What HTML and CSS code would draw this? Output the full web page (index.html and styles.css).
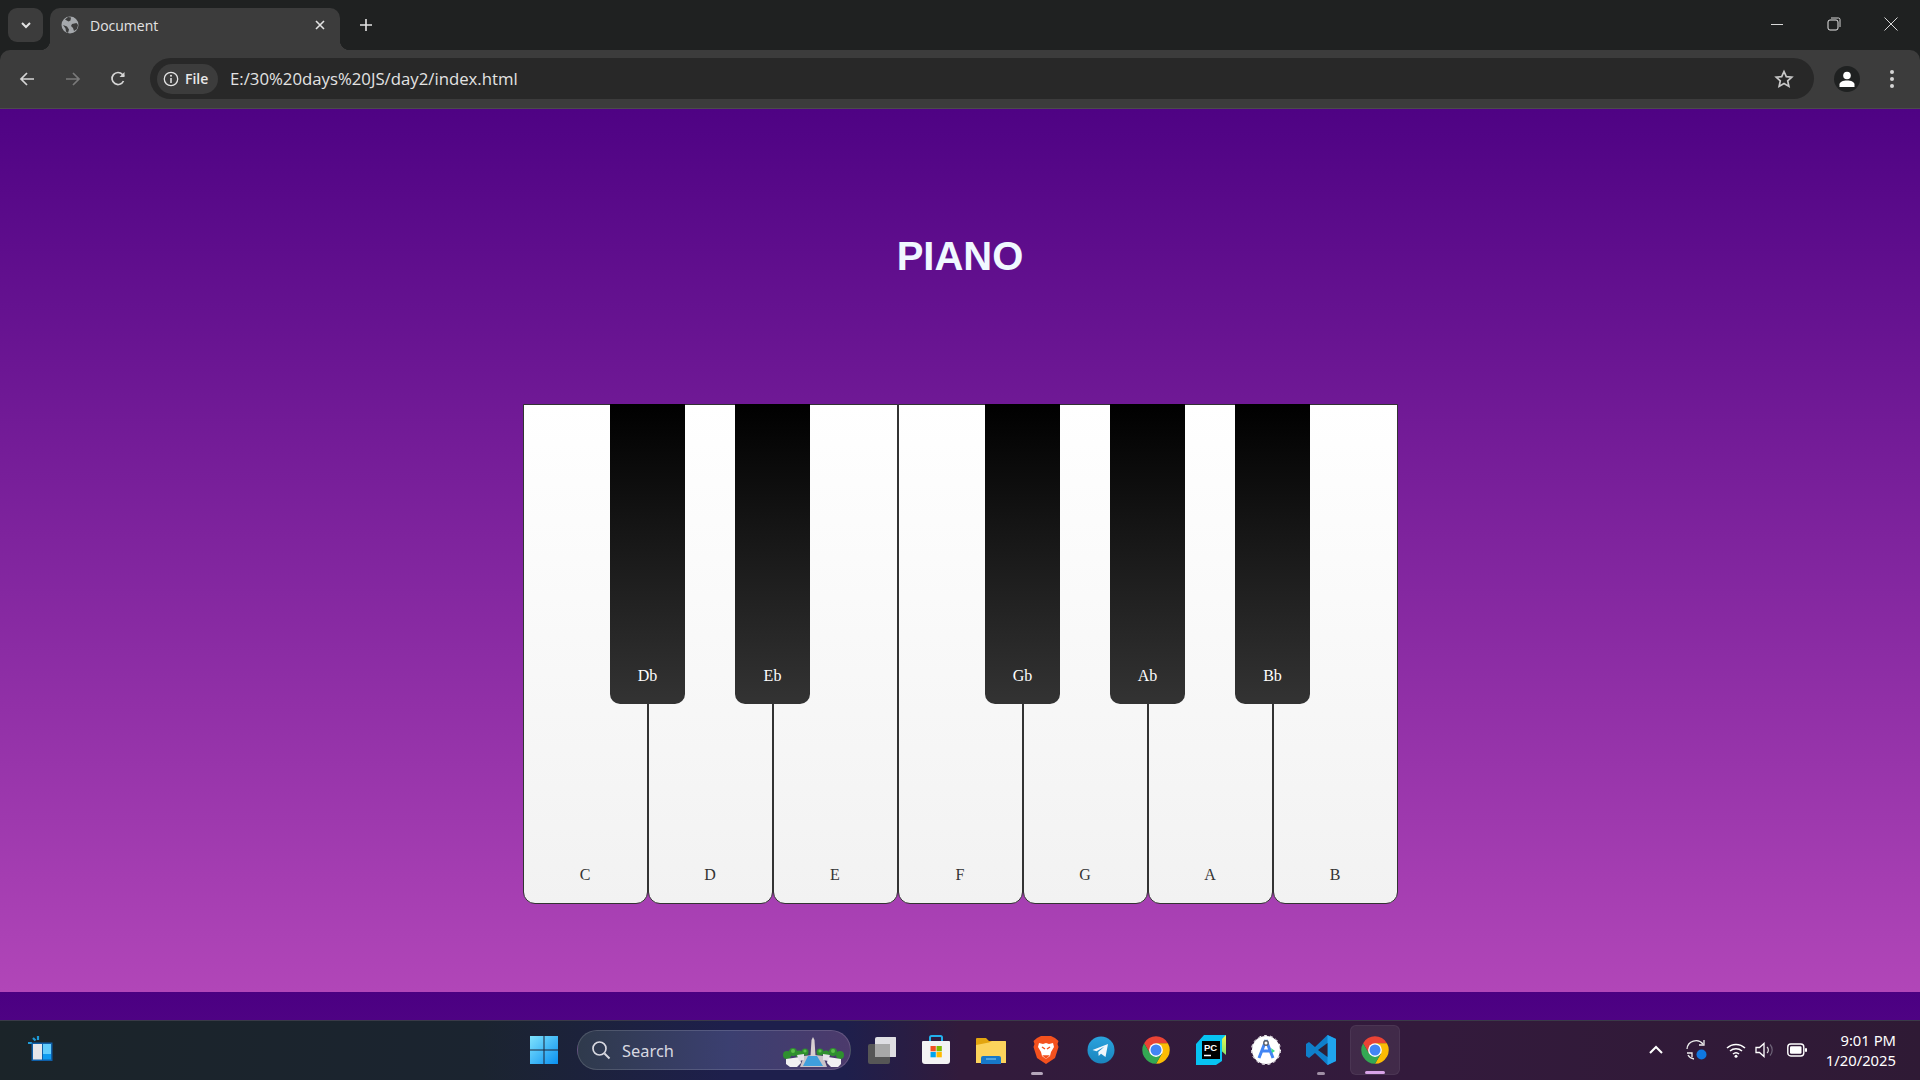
FILE: index.html
```html
<!DOCTYPE html>
<html lang="en">
<head>
    <meta charset="UTF-8">
    <title>Document</title>
    <link rel="stylesheet" href="styles.css">
</head>
<body>
    <svg class="defs" width="0" height="0">
        <symbol id="chrome" viewBox="0 0 48 48">
            <path fill="#ea4335" d="M4.95 13A22 22 0 0 1 43.05 13H24L14.5 29.5Z"/>
            <path fill="#fbbc04" d="M43.05 13A22 22 0 0 1 24 46L33.5 29.5 24 13Z"/>
            <path fill="#34a853" d="M24 46A22 22 0 0 1 4.95 13L14.5 29.5H33.5Z"/>
            <circle cx="24" cy="24" r="11" fill="#fff"/>
            <circle cx="24" cy="24" r="8.8" fill="#4285f4"/>
        </symbol>
    </svg>

    <div class="tabstrip">
        <div class="tab-search">
            <svg width="14" height="14" viewBox="0 0 14 14"><path d="M3 5l4 4 4-4" fill="none" stroke="#e3e3e3" stroke-width="2"/></svg>
        </div>
        <div class="tab">
            <svg class="tab-icon" width="18" height="18" viewBox="0 0 18 18">
                <circle cx="9" cy="9" r="8.5" fill="#a5a8ac"/>
                <path fill="#3c3c3c" d="M4 3.5l3.500 2 2-1 .5-3-3-.5zM2 9l4 1.500 2 3-1 3.500-2-1.500-.5-3zM11 8l4.500-1 1.500 2-1 4-3 2-1-3-2-2z"/>
            </svg>
            <span class="tab-title">Document</span>
            <svg class="tab-close" width="12" height="12" viewBox="0 0 12 12"><path d="M2 2l8 8M10 2l-8 8" stroke="#e3e3e3" stroke-width="1.600"/></svg>
        </div>
        <svg class="new-tab" width="14" height="14" viewBox="0 0 14 14"><path d="M7 1v12M1 7h12" stroke="#e3e3e3" stroke-width="1.600"/></svg>
        <div class="window-btns">
            <svg width="14" height="14" viewBox="0 0 14 14"><path d="M1 7.500h12" stroke="#d8d8d8"/></svg>
            <svg width="14" height="14" viewBox="0 0 14 14"><rect x="1" y="3" width="10" height="10" rx="2" fill="none" stroke="#e8e8e8"/><path d="M4 1h7.500A1.500 1.500 0 0 1 13 2.500V10" fill="none" stroke="#d8d8d8"/></svg>
            <svg width="14" height="14" viewBox="0 0 14 14"><path d="M.5.500l13 13M13.500.500l-13 13" stroke="#d8d8d8"/></svg>
        </div>
    </div>

    <div class="toolbar">
        <div class="nav-btns">
            <svg width="18" height="18" viewBox="0 0 18 18"><path d="M16 9H3M9 3L3 9l6 6" fill="none" stroke="#d5d5d5" stroke-width="1.700"/></svg>
            <svg width="18" height="18" viewBox="0 0 18 18"><path d="M2 9h13M9 3l6 6-6 6" fill="none" stroke="#7a7a7a" stroke-width="1.700"/></svg>
            <svg width="18" height="18" viewBox="0 0 18 18"><path d="M14.500 11A6 6 0 1 1 13.500 4.500L15 6" fill="none" stroke="#d5d5d5" stroke-width="1.700"/><path d="M15.500 2v5h-5z" fill="#d5d5d5"/></svg>
        </div>
        <div class="omnibox">
            <div class="chip">
                <svg width="16" height="16" viewBox="0 0 16 16"><circle cx="8" cy="8" r="6.700" fill="none" stroke="#e3e3e3" stroke-width="1.300"/><path d="M8 7v5" stroke="#e3e3e3" stroke-width="1.500"/><circle cx="8" cy="4.800" r="1" fill="#e3e3e3"/></svg>
                <span>File</span>
            </div>
            <span class="url">E:/30%20days%20JS/day2/index.html</span>
            <svg class="star" width="20" height="20" viewBox="0 0 20 20"><path d="M10 2.500l2.300 5.100 5.500.6-4.100 3.700 1.200 5.500L10 14.600l-4.900 2.800 1.200-5.500L2.200 8.200l5.500-.6z" fill="none" stroke="#c8c8c8" stroke-width="1.700"/></svg>
        </div>
        <div class="avatar">
            <svg width="18" height="18" viewBox="0 0 18 18"><circle cx="9" cy="5.500" r="3.800" fill="#fff"/><path d="M1.500 17v-2.500C1.500 12 5 10.500 9 10.500s7.500 1.500 7.500 4V17z" fill="#fff"/></svg>
        </div>
        <div class="menu-dots"><i></i><i></i><i></i></div>
    </div>

    <main class="page">
        <h1 class="title">PIANO</h1>
        <div class="piano">
            <div class="key white">C</div>
            <div class="key black">Db</div>
            <div class="key white">D</div>
            <div class="key black">Eb</div>
            <div class="key white">E</div>
            <div class="key white">F</div>
            <div class="key black">Gb</div>
            <div class="key white">G</div>
            <div class="key black">Ab</div>
            <div class="key white">A</div>
            <div class="key black">Bb</div>
            <div class="key white">B</div>
        </div>
    </main>

    <footer class="taskbar">
        <div class="widgets">
            <svg width="30" height="30" viewBox="0 0 30 30">
                <path d="M8 3l2.500 2.500M13 1v4M3 8h4" stroke="#1e9bd7" stroke-width="2.200"/>
                <rect x="6.500" y="7.500" width="21" height="18.500" fill="#0f5fa8"/>
                <rect x="8" y="9" width="9" height="15.500" fill="#e6e6e9"/>
                <rect x="18" y="9" width="8" height="10" fill="#63cdfd"/>
                <rect x="18" y="19" width="8" height="5.500" fill="#109bf0"/>
            </svg>
        </div>
        <div class="task-center">
            <svg class="start" width="30" height="30" viewBox="0 0 30 30">
                <defs><linearGradient id="win" x1="0" y1="0" x2="1" y2="1"><stop offset="0" stop-color="#7fe3fd"/><stop offset="1" stop-color="#0a90f0"/></linearGradient></defs>
                <path fill="url(#win)" d="M1 1h13.500v13.500H1zM15.500 1H29v13.500H15.500zM1 15.500h13.500V29H1zM15.500 15.500H29V29H15.500z"/>
            </svg>
            <div class="search">
                <svg width="20" height="20" viewBox="0 0 20 20"><circle cx="8.500" cy="8.500" r="6.500" fill="none" stroke="#d8d8e0" stroke-width="1.700"/><path d="M13.500 13.500l5 5" stroke="#d8d8e0" stroke-width="2"/></svg>
                <span class="search-text">Search</span>
                <svg class="search-art" width="62" height="32" viewBox="0 0 62 32">
                    <g fill="#2f8f2f">
                        <circle cx="4" cy="18" r="4"/><circle cx="10" cy="15" r="4"/><circle cx="16" cy="17" r="3.500"/><circle cx="22" cy="15" r="3.500"/>
                        <circle cx="37" cy="15" r="3.500"/><circle cx="43" cy="17" r="3.500"/><circle cx="50" cy="15" r="4"/><circle cx="57" cy="18" r="4"/>
                    </g>
                    <g fill="#5cc04a">
                        <circle cx="10" cy="14" r="2"/><circle cx="22" cy="14" r="1.600"/><circle cx="37" cy="14" r="1.600"/><circle cx="50" cy="14" r="2"/>
                    </g>
                    <path d="M21 19l8-1 3 0 8 1 4 11H17z" fill="#c9c3c9"/>
                    <path d="M25 19h9l6 10H20z" fill="#3f9fdd"/>
                    <path d="M27.500 19L28.500 3 30 0l1.500 3 1 16z" fill="#d8cfd0"/>
                    <path d="M3 22l14-2 1 6-4 4H7l-4-3zM58 22l-13-2-1 6 4 4h7l3-3z" fill="#f1f0f2"/>
                    <path d="M14 18l7-1v6l-5 1zM47 18l-7-1v6l5 1z" fill="#e4e2e8"/>
                </svg>
            </div>
            <div class="apps">
                <div class="app">
                    <svg width="30" height="30" viewBox="0 0 30 30"><rect x="2" y="9" width="22" height="20" rx="2" fill="#565656"/><rect x="9" y="2" width="22" height="20" rx="2" fill="#f4f4f4" fill-opacity=".9"/><rect x="9" y="9" width="15" height="13" fill="#a8a8a8"/></svg>
                </div>
                <div class="app">
                    <svg width="30" height="30" viewBox="0 0 30 30">
                        <path d="M9 6V2.500A1.500 1.500 0 0 1 10.500 1h9A1.500 1.500 0 0 1 21 2.500V6" fill="none" stroke="#22b0ec" stroke-width="2"/>
                        <path d="M2 6h26a1 1 0 0 1 1 1v19a3 3 0 0 1-3 3H4a3 3 0 0 1-3-3V7a1 1 0 0 1 1-1z" fill="#f3f3f3"/>
                        <path fill="#f25022" d="M9.500 11h5.300v5.300H9.500z"/><path fill="#7fba00" d="M15.500 11h5.300v5.300h-5.300z"/>
                        <path fill="#00a4ef" d="M9.500 17h5.300v5.300H9.500z"/><path fill="#ffb900" d="M15.500 17h5.300v5.300h-5.300z"/>
                    </svg>
                </div>
                <div class="app">
                    <svg width="30" height="30" viewBox="0 0 30 30">
                        <path d="M0 4a1 1 0 0 1 1-1h9l3 3h16a1 1 0 0 1 1 1v3H0z" fill="#e3a50f"/>
                        <path d="M0 10l13-2.500L16 6h13a1 1 0 0 1 1 1v21H0z" fill="#fcd35c"/>
                        <path d="M5 23a2 2 0 0 1 2-2h16a2 2 0 0 1 2 2v6H5z" fill="#1778c9"/>
                        <path d="M10 24h10" stroke="#8fd0f5" stroke-width="1"/>
                    </svg>
                </div>
                <div class="app running-part">
                    <svg width="30" height="30" viewBox="0 0 30 30">
                        <path d="M6 3l4-2h10l4 2 3.500 3-1 3 1 3-3.500 11-9 6-9-6L2.500 12l1-3-1-3z" fill="#f4511e"/>
                        <path d="M8 8l4 1 3-1 3 1 4-1 1 4-3 5-1 4-4 3-4-3-1-4-3-5z" fill="#fff"/>
                        <path d="M11 12l3 2M19 12l-3 2M13 21h4l-2 2z" stroke="#f4511e" stroke-width="1.500" fill="#f4511e"/>
                    </svg>
                </div>
                <div class="app">
                    <svg width="28" height="28" viewBox="0 0 28 28">
                        <defs><linearGradient id="tg" x1="0" y1="0" x2="0" y2="1"><stop offset="0" stop-color="#2aa3de"/><stop offset="1" stop-color="#1a84bd"/></linearGradient></defs>
                        <circle cx="14" cy="14" r="13.500" fill="url(#tg)"/>
                        <path d="M5.500 14L21 8l-2.500 13-4.500-3.300-2.300 2.200-.4-4 6.200-5.400-8 4.800z" fill="#f2f7fb"/>
                    </svg>
                </div>
                <div class="app"><svg width="30" height="30"><use href="#chrome"/></svg></div>
                <div class="app">
                    <svg width="30" height="30" viewBox="0 0 30 30">
                        <defs><linearGradient id="pc" x1="0" y1="1" x2="1" y2="0"><stop offset="0" stop-color="#21d789"/><stop offset="1" stop-color="#fcf84a"/></linearGradient></defs>
                        <path d="M8 0h22v20z" fill="url(#pc)"/>
                        <path d="M8 0h22l-4 4v22l-6 4H0V9z" fill="#07c3f2"/>
                        <rect x="6" y="6" width="18" height="18" fill="#000"/>
                        <text x="8" y="16" class="pc-text">PC</text>
                        <path d="M8 20.500h7" stroke="#fff" stroke-width="1.500"/>
                    </svg>
                </div>
                <div class="app">
                    <svg width="30" height="30" viewBox="0 0 30 30">
                        <circle cx="15" cy="15" r="14" fill="#fff"/>
                        <circle cx="15" cy="15" r="14.500" fill="none" stroke="#fff" stroke-width="1" stroke-dasharray="3 3"/>
                        <path d="M15 5L8 23M15 5l7 18M10 16h10" fill="none" stroke="#4285f4" stroke-width="3"/>
                        <circle cx="15" cy="8" r="2.200" fill="#fff" stroke="#5f6368" stroke-width="1.400"/>
                        <path d="M20 13l4 3-3 2z" fill="#3ddc84"/>
                    </svg>
                </div>
                <div class="app running-dot">
                    <svg width="30" height="30" viewBox="0 0 30 30">
                        <path d="M21.500 0L30 4v22l-8.500 4L9 18 3 23 0 21v-12l3-2 6 5z" fill="#0f7fcb"/>
                        <path d="M21.500 0L30 4v22l-8.500 4z" fill="#20a4ef"/>
                        <path d="M21.500 8v14L12 15z" fill="#2c2038"/>
                    </svg>
                </div>
                <div class="app active"><svg width="30" height="30"><use href="#chrome"/></svg></div>
            </div>
        </div>
        <div class="tray">
            <svg width="18" height="18" viewBox="0 0 18 18"><path d="M3 12l6-6 6 6" fill="none" stroke="#fff" stroke-width="2"/></svg>
            <svg class="tray-sync" width="22" height="22" viewBox="0 0 22 22">
                <path d="M1 10A9 9 0 0 1 17 5M2 16a8 8 0 0 0 6 4" fill="none" stroke="#eee" stroke-width="1.300"/>
                <path d="M18 1v5h-5M1 14h5v4" fill="none" stroke="#eee" stroke-width="1.300"/>
                <circle cx="15.500" cy="15.500" r="5" fill="#0f78e0"/>
            </svg>
            <svg class="tray-wifi" width="20" height="16" viewBox="0 0 20 16"><path d="M1 6a13 13 0 0 1 18 0M4 9a9 9 0 0 1 12 0M7 12a4.500 4.500 0 0 1 6 0" fill="none" stroke="#fff" stroke-width="1.500"/><circle cx="10" cy="14.200" r="1.500" fill="#fff"/></svg>
            <svg class="tray-vol" width="20" height="18" viewBox="0 0 20 18"><path d="M1 6.500h3.500L9 2.500v13l-4.500-4H1z" fill="none" stroke="#fff" stroke-width="1.300"/><path d="M12 6a4 4 0 0 1 0 6" fill="none" stroke="#ddd" stroke-width="1.200"/><path d="M15 3.500a8 8 0 0 1 0 11" fill="none" stroke="#6e6478" stroke-width="1.200"/></svg>
            <svg class="tray-batt" width="20" height="14" viewBox="0 0 20 14"><rect x=".8" y="1" width="16" height="12" rx="3" fill="none" stroke="#fff" stroke-width="1.400"/><rect x="3" y="3.200" width="11.500" height="7.600" rx="1.200" fill="#fff"/><rect x="18" y="5" width="2" height="4" rx="1" fill="#fff"/></svg>
            <div class="clock">
                <div>9:01 PM</div>
                <div>1/20/2025</div>
            </div>
        </div>
    </footer>
</body>
</html>
```

FILE: styles.css
```css
* {
    box-sizing: border-box;
    margin: 0;
    padding: 0;
}

html, body {
    height: 100%;
    overflow: hidden;
}

body {
    display: flex;
    flex-direction: column;
    background-color: #1f2121;
    font-family: 'Open Sans', sans-serif;
}

.defs {
    position: absolute;
}

/* browser chrome */

.tabstrip {
    height: 50px;
    display: flex;
    align-items: flex-end;
    background-color: #1f2121;
    flex-shrink: 0;
}

.tab-search {
    width: 35px;
    height: 34px;
    margin: 0 7px 8px 8px;
    background-color: #3c3c3c;
    border-radius: 9px;
    display: flex;
    justify-content: center;
    align-items: center;
}

.tab {
    position: relative;
    width: 290px;
    height: 42px;
    background-color: #3c3c3c;
    border-radius: 10px 10px 0 0;
    display: flex;
    align-items: center;
    padding: 0 14px 8px 11px;
    color: #e3e3e3;
    font-size: 14px;
}

.tab:before,
.tab:after {
    content: '';
    position: absolute;
    bottom: 0;
    width: 10px;
    height: 10px;
}

.tab:before {
    left: -10px;
    background: radial-gradient(circle at 0 0, transparent 10px, #3c3c3c 10.5px);
}

.tab:after {
    right: -10px;
    background: radial-gradient(circle at 100% 0, transparent 10px, #3c3c3c 10.5px);
}

.tab-title {
    margin-left: 11px;
    flex: 1;
}

.new-tab {
    margin: 0 0 18px 19px;
}

.window-btns {
    margin-left: auto;
    display: flex;
    gap: 43px;
    padding: 0 22px 19px 0;
}

.toolbar {
    height: 59px;
    flex-shrink: 0;
    background-color: #3c3c3c;
    border-radius: 10px 10px 0 0;
    border-bottom: 1px solid #4c4c4c;
    display: flex;
    align-items: center;
    padding: 0 0 1px 0;
}

.nav-btns {
    display: flex;
    gap: 27.5px;
    padding-left: 18px;
    width: 150px;
}

.omnibox {
    flex: 1;
    height: 41px;
    background-color: #282828;
    border-radius: 21px;
    display: flex;
    align-items: center;
    padding: 0 20px 0 7px;
}

.chip {
    width: 61px;
    height: 30px;
    background-color: #3c3c3c;
    border-radius: 15px;
    display: flex;
    align-items: center;
    gap: 6px;
    padding-left: 6px;
    color: #e8e8e8;
    font-size: 14px;
    font-weight: 600;
}

.url {
    margin-left: 12px;
    color: #e3e3e3;
    font-size: 16.75px;
    flex: 1;
}

.avatar {
    width: 26px;
    height: 26px;
    margin: 0 0 0 20px;
    background-color: #1f2121;
    border-radius: 50%;
    display: flex;
    justify-content: center;
    align-items: center;
}

.menu-dots {
    width: 26px;
    margin: 0 15px 0 19px;
    display: flex;
    flex-direction: column;
    align-items: center;
    gap: 3px;
}

.menu-dots i {
    width: 4px;
    height: 4px;
    border-radius: 50%;
    background-color: #d5d5d5;
}

/* page */

.page {
    flex: 1;
    background-image: linear-gradient(to bottom, #4b0082, #b146b8);
    background-size: 100% 915px;
    background-position: 0 -32px;
    background-repeat: repeat-y;
    padding-top: 124px;
}

.title {
    color: aliceblue;
    font-family: 'Liberation Sans', Arial, sans-serif;
    font-size: 40px;
    font-weight: bold;
    line-height: 46px;
    text-align: center;
}

.piano {
    display: flex;
    justify-content: center;
    margin-top: 125px;
    font-family: 'Liberation Serif', 'Times New Roman', serif;
    font-size: 16px;
}

.key {
    display: flex;
    justify-content: center;
    align-items: flex-end;
}

.white {
    width: 125px;
    height: 500px;
    padding-bottom: 19px;
    color: #333;
    background: linear-gradient(to bottom, #fff, #f2f2f2);
    border: 1px solid #333;
    border-radius: 0 0 12px 12px;
}

.black {
    width: 75px;
    height: 300px;
    margin: 0 -37.5px;
    padding-bottom: 19px;
    color: #fff;
    background: linear-gradient(to bottom, #000, #333);
    border-radius: 0 0 10px 10px;
    z-index: 1;
}

/* taskbar */

.taskbar {
    height: 60px;
    flex-shrink: 0;
    border-top: 1px solid #3a3a48;
    padding-bottom: 1px;
    background: linear-gradient(to right, #1b2429 0, #1b2430 25%, #1e1f4c 38%, #1e1f4c 44%, #321b3c 50%, #331a3c 75%, #2f1a35 100%);
    display: flex;
    align-items: center;
    position: relative;
}

.widgets {
    width: 80px;
    padding-left: 25px;
    display: flex;
}

.task-center {
    margin-left: 449px;
    display: flex;
    align-items: center;
}

.start {
    margin-right: 18px;
}

.search {
    width: 274px;
    height: 40px;
    border-radius: 20px;
    border: 1px solid rgba(255, 255, 255, 0.14);
    background: linear-gradient(to right, #2f3a4c, #3b3f70 55%, #4c3a6c);
    display: flex;
    align-items: center;
    padding: 0 5px 0 13px;
    overflow: hidden;
}

.search-text {
    margin-left: 11px;
    color: #d8d8e0;
    font-family: 'Noto Sans', sans-serif;
    font-size: 16.4px;
    flex: 1;
}

.search-art {
    align-self: flex-end;
}

.apps {
    display: flex;
    margin-left: 2px;
}

.app {
    position: relative;
    width: 55px;
    height: 50px;
    display: flex;
    justify-content: center;
    align-items: center;
    border-radius: 6px;
}

.app.active {
    width: 50px;
    margin-left: 2px;
    background-color: rgba(255, 255, 255, 0.07);
    border: 1px solid rgba(255, 255, 255, 0.06);
}

.app.active:after,
.running-dot:after,
.running-part:after {
    content: '';
    position: absolute;
    bottom: 0;
    left: 50%;
    height: 3px;
    border-radius: 2px;
}

.app.active:after {
    width: 20px;
    margin-left: -10px;
    background-color: #d8a3e8;
}

.running-dot:after {
    width: 8px;
    margin-left: -4px;
    background-color: #a08fa5;
}

.running-part:after {
    width: 12px;
    margin-left: -15px;
    background-color: #b5a6bb;
}

.pc-text {
    fill: #fff;
    font-family: 'Liberation Sans', sans-serif;
    font-size: 9.5px;
    font-weight: bold;
}

.tray {
    margin-left: auto;
    display: flex;
    align-items: center;
    padding-right: 24px;
    color: #fff;
}

.tray-sync {
    margin-left: 21px;
}

.tray-wifi {
    margin-left: 18px;
}

.tray-vol {
    margin-left: 9px;
}

.tray-batt {
    margin-left: 12px;
}

.clock {
    margin-left: 19px;
    text-align: right;
    font-family: 'Noto Sans', sans-serif;
    font-size: 14.8px;
    line-height: 20px;
}
```
